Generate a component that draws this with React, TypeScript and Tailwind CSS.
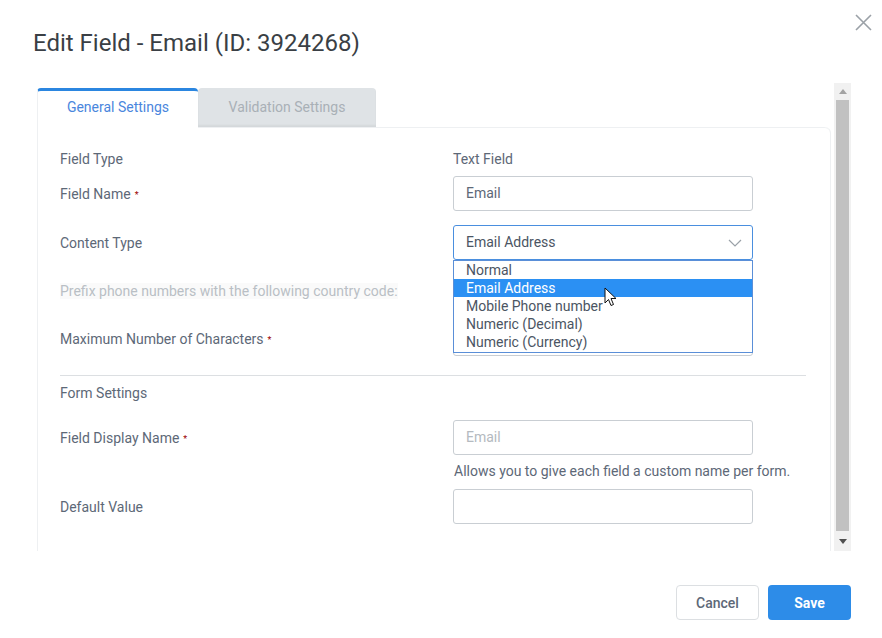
import React from "react";

const Req = () => (
  <span className="ml-[4px] text-[9px] text-[#9b0000] relative top-[-1px]">*</span>
);

function Row({ label, children, muted }: { label: React.ReactNode; children?: React.ReactNode; muted?: boolean }) {
  return (
    <div className="flex items-center h-[35px]">
      <div className="w-[393px] shrink-0 relative top-[1px]">
        <span className={muted ? "text-[#b9bfc5] bg-[#fafafa]" : "text-[#5d6877]"}>{label}</span>
      </div>
      <div className="w-[300px] relative h-full">{children}</div>
    </div>
  );
}

const inputCls =
  "w-[300px] h-[35px] border border-[#c9ced3] rounded-[3px] px-[12px] flex items-center text-[#5d6877] bg-white";

export default function App() {
  return (
    <div
      className="w-[882px] h-[638px] bg-white relative text-[14px]"
      style={{ fontFamily: "Roboto, 'Noto Sans', sans-serif" }}
    >
      {/* close */}
      <button className="absolute left-[855px] top-[14px] w-[17px] h-[17px]">
        <svg width="17" height="17" viewBox="0 0 17 17">
          <path d="M1 1L16 16M16 1L1 16" stroke="#9ba1a7" strokeWidth="1.6" />
        </svg>
      </button>

      <div className="pt-[28px] pl-[33px] h-[83px]">
        <h1 className="text-[24px] leading-[30px] text-[#3a3f45]">Edit Field - Email (ID: 3924268)</h1>
      </div>

      <div className="flex ml-[37px] h-[468px]">
        {/* content */}
        <div className="w-[794px] pt-[5px] flex flex-col">
          {/* tabs */}
          <div className="flex h-[39px]">
            <div className="w-[161px] h-[39px] pb-[3px] border-t-[3px] border-[#2b86e0] rounded-t-[4px] border-l border-l-[#eef0f2] bg-white flex items-center justify-center text-[#4a86dd]">
              General Settings
            </div>
            <div className="w-[178px] h-[39px] bg-[#dfe3e6] rounded-t-[4px] flex items-center justify-center text-[#a9b0b6] shadow-[inset_0_-2px_2px_rgba(0,0,0,0.05)]">
              Validation Settings
            </div>
          </div>
          {/* panel */}
          <div className="flex-1 border border-t-0 border-b-0 border-[#eef0f2] rounded-tr-[6px] relative">
            <div className="absolute left-[160px] right-0 top-0 border-t border-[#eef0f2] rounded-tr-[6px] h-[8px] border-r-0"></div>
            <div className="pl-[22px] pr-[24px] pt-[22px]">
              <div className="flex items-center h-[20px]">
                <div className="w-[393px] text-[#5d6877]">Field Type</div>
                <div className="text-[#5d6877]">Text Field</div>
              </div>
              <div className="mt-[7px]">
                <Row label={<>Field Name<Req /></>}>
                  <div className={inputCls}>Email</div>
                </Row>
              </div>
              <div className="mt-[14px] relative z-10">
                <Row label="Content Type">
                  <div className="w-[300px] h-[35px] border border-[#4a8fdf] rounded-[3px] pl-[12px] pr-[10px] flex items-center justify-between text-[#4b5563] bg-white">
                    <span>Email Address</span>
                    <svg width="14" height="8" viewBox="0 0 14 8">
                      <path d="M1 1L7 7L13 1" fill="none" stroke="#9aa1a8" strokeWidth="1.2" />
                    </svg>
                  </div>
                  <div className="absolute left-0 top-[35px] w-[300px] border border-[#5a8fd8] bg-white text-[#4b5563] leading-[18px]">
                    <div className="pl-[12px]">Normal</div>
                    <div className="pl-[12px] bg-[#2b90f3] text-white">Email Address</div>
                    <div className="pl-[12px]">Mobile Phone number</div>
                    <div className="pl-[12px]">Numeric (Decimal)</div>
                    <div className="pl-[12px] pb-[1px]">Numeric (Currency)</div>
                    {/* cursor */}
                    <svg className="absolute left-[150px] top-[26px]" width="13" height="20" viewBox="0 0 13 20">
                      <path d="M1 1L1 16L4.5 12.5L7 18.5L9.5 17.5L7 11.5L12 11.5Z" fill="white" stroke="#111" strokeWidth="1" strokeLinejoin="round" />
                    </svg>
                  </div>
                </Row>
              </div>
              <div className="mt-[13px]">
                <Row label="Prefix phone numbers with the following country code:" muted />
              </div>
              <div className="mt-[13px]">
                <Row label={<>Maximum Number of Characters<Req /></>}>
                  <div className={inputCls}></div>
                </Row>
              </div>
              <div className="mt-[19px] border-t border-[#dcdfe2]"></div>
              <div className="mt-[7px] h-[20px] flex items-center text-[#5d6877]">Form Settings</div>
              <div className="mt-[17px]">
                <Row label={<>Field Display Name<Req /></>}>
                  <div className={inputCls + " !text-[#b4bac0]"}>Email</div>
                </Row>
              </div>
              <div className="mt-[7px] h-[18px] flex items-center pl-[394px] text-[#5d6877]">
                Allows you to give each field a custom name per form.
              </div>
              <div className="mt-[9px]">
                <Row label="Default Value">
                  <div className={inputCls}></div>
                </Row>
              </div>
            </div>
          </div>
        </div>
        {/* scrollbar */}
        <div className="ml-[3px] w-[17px] bg-[#f1f1f1] flex flex-col items-center">
          <div className="h-[17px] w-full flex items-center justify-center">
            <svg width="8" height="5" viewBox="0 0 8 5"><path d="M0 5L4 0L8 5Z" fill="#a3a3a3" /></svg>
          </div>
          <div className="flex-1 w-[13px] bg-[#c1c1c1]"></div>
          <div className="h-[20px] w-full flex items-center justify-center">
            <svg width="8" height="5" viewBox="0 0 8 5"><path d="M0 0L4 5L8 0Z" fill="#505050" /></svg>
          </div>
        </div>
      </div>

      {/* footer */}
      <div className="flex justify-end gap-[9px] pr-[31px] mt-[34px]">
        <button className="w-[83px] h-[35px] pt-[1px] border border-[#dcdfe2] rounded-[4px] bg-white text-[#5d6877] font-medium">
          Cancel
        </button>
        <button className="w-[83px] h-[35px] pt-[1px] rounded-[4px] bg-[#2d8ce8] text-white font-bold">Save</button>
      </div>
    </div>
  );
}
